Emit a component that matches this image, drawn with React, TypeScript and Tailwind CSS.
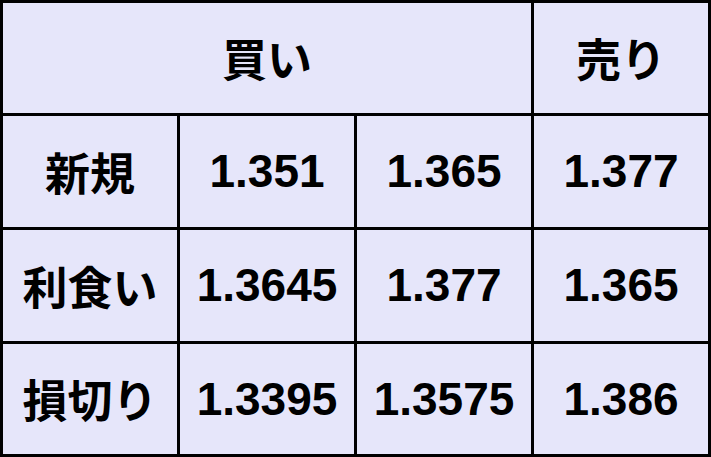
import { Fragment } from 'react';

const rows: [string, string, string, string][] = [
  ['新規', '1.351', '1.365', '1.377'],
  ['利食い', '1.3645', '1.377', '1.365'],
  ['損切り', '1.3395', '1.3575', '1.386'],
];

const jp = "font-['Noto_Sans_CJK_JP','Noto_Sans_CJK_SC',sans-serif]";
const num = "font-['Liberation_Sans',Arial,sans-serif]";

export default function App() {
  return (
    <div className="w-[711px] h-[457px] bg-black p-[3px] grid grid-cols-[174px_174px_174px_174px] grid-rows-[110px_111px_111px_110px] gap-[3px] text-black font-bold">
      <div className={`col-span-3 bg-[#e6e6fa] flex items-center justify-center text-[45px] ${jp}`}>
        買い
      </div>
      <div className={`bg-[#e6e6fa] flex items-center justify-center text-[45px] ${jp}`}>
        売り
      </div>
      {rows.map(([label, a, b, c]) => (
        <Fragment key={label}>
          <div className={`bg-[#e6e6fa] flex items-center justify-center text-[45px] ${jp}`}>
            {label}
          </div>
          {[a, b, c].map((v, i) => (
            <div key={i} className={`bg-[#e6e6fa] flex items-center justify-center text-[46px] ${num}`}>
              {v}
            </div>
          ))}
        </Fragment>
      ))}
    </div>
  );
}
